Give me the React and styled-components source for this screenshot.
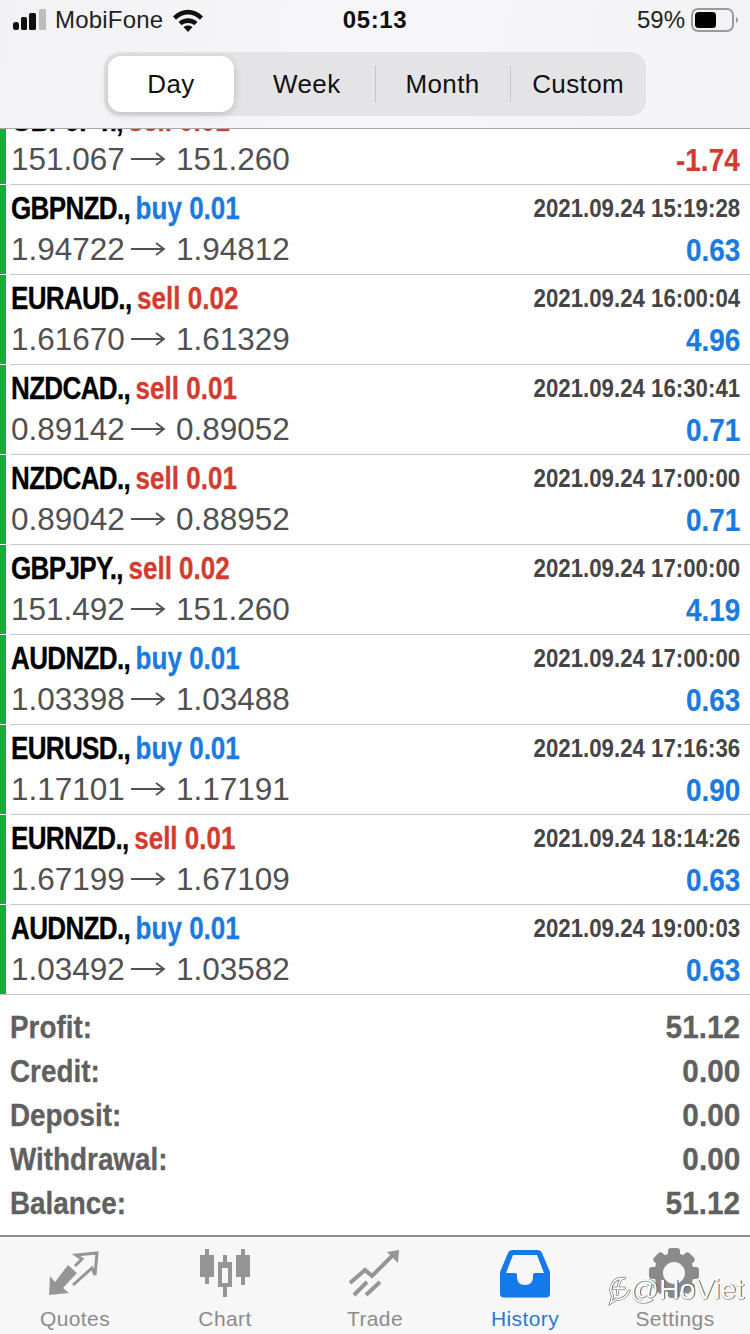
import React from "react";
import styled, { createGlobalStyle } from "styled-components";

const Global = createGlobalStyle`
  html, body { margin: 0; padding: 0; background: #fff; }
  body { font-family: "Liberation Sans", Arial, sans-serif; }
`;
const Page = styled.div`
  width: 750px; height: 1334px; display: flex; flex-direction: column; overflow: hidden; position: relative; background: #fff;
`;
const Header = styled.header`
  height: 129px; box-sizing: border-box; flex: none; background: linear-gradient(100deg, #f2f2f4, #f7f7fa 50%, #f3f3f5);
  border-bottom: 1px solid #a8a8a8; position: relative; z-index: 2;
`;
const Status = styled.div`
  height: 40px; padding: 0 12px 0 13px; display: flex; align-items: center; position: relative; color: #111; font-size: 24px;
`;
const Carrier = styled.span` margin-left: 9px; margin-right: 10px; letter-spacing: .2px; color: #222; `;
const Clock = styled.span`
  position: absolute; left: 0; right: 0; text-align: center; font-weight: 700; font-size: 24px; letter-spacing: .6px;
`;
const Battery = styled.span` margin-left: auto; margin-right: 6px; color: #222; `;
const Segments = styled.div`
  margin: 12px 0 0 104px; width: 542px; height: 64px; border-radius: 16px; background: #e4e4e6; display: flex; align-items: center; padding: 4px 0 4px 4px; box-sizing: border-box;
`;
const Segment = styled.div`
  flex: 1; height: 56px; display: flex; align-items: center; justify-content: center; font-size: 26px; letter-spacing: .4px; color: #111; position: relative;
  ${p => p.$active && `background: #fff; border-radius: 13px; box-shadow: 0 2px 8px rgba(0,0,0,.18); flex: none; width: 126px; margin-right: 5px;`}
  ${p => p.$divider && `&::before { content: ""; position: absolute; left: 0; top: 10px; bottom: 10px; width: 1px; background: #c6c6c8; }`}
`;
const List = styled.div`
  height: 866px; flex: none; overflow: hidden; box-sizing: border-box; border-bottom: 1px solid #c4c4c4;
`;
const Rows = styled.div` margin-top: -34px; `;
const Row = styled.div`
  height: 90px; box-sizing: border-box; padding-left: 11px; padding-right: 10px; position: relative; display: flex; flex-direction: column;
  &::before { content: ""; position: absolute; left: 0; top: 0; bottom: 1px; width: 6px; background: #12ad3d; }
  &::after { content: ""; position: absolute; left: 10px; right: 0; bottom: 0; height: 1px; background: #c8c8c8; }
  &:last-child::after { display: none; }
`;
const Line = styled.div` height: 44px; display: flex; align-items: center; justify-content: space-between; white-space: nowrap; `;
const Title = styled.span`
  font-weight: 700; font-size: 31px; color: #000; transform: scaleX(.84); transform-origin: left center; display: inline-block;
  margin-top: ${p => (p.$clipped ? "8px" : "4px")}; -webkit-text-stroke: .3px currentColor;
`;
const Symbol_ = styled.span` letter-spacing: -.8px; `;
const Side = styled.span` color: ${p => (p.$buy ? "#1b7ae0" : "#d23b2e")}; margin-left: -2px; `;
const Time = styled.span`
  font-weight: 700; font-size: 25px; color: #454545; transform: scaleX(.89); transform-origin: right center; display: inline-block; margin-top: 2px;
`;
const Price = styled.span` font-size: 31.5px; color: #505050; display: flex; align-items: center; margin-top: -4px; `;
const Arrow = styled.svg` width: 36px; height: 16px; margin: 0 10px 0 5px; flex: none; `;
const Pnl = styled.span`
  font-weight: 700; font-size: 31px; color: ${p => (p.$loss ? "#d23b2e" : "#1b7ae0")}; transform: scaleX(.9); transform-origin: right center; display: inline-block; margin-top: -1px; -webkit-text-stroke: .2px currentColor;
`;
const Summary = styled.div` flex: none; height: 240px; padding: 10px 10px 0 10px; box-sizing: border-box; `;
const SumRow = styled.div`
  height: 44px; display: flex; justify-content: space-between; align-items: center; font-weight: 700; font-size: 32px; color: #606060; -webkit-text-stroke: .3px currentColor;
`;
const SumLabel = styled.span` display: inline-block; transform: scaleX(.87); transform-origin: left center; `;
const SumValue = styled.span` display: inline-block; transform: scaleX(.93); transform-origin: right center; `;
const Tabs = styled.nav`
  flex: 1; display: grid; grid-template-columns: repeat(5, 1fr); background: #f7f7f7; border-top: 2px solid #8e8e8e; box-sizing: border-box; position: relative;
`;
const Tab = styled.div`
  display: flex; flex-direction: column; align-items: center; padding-top: 13px; color: ${p => (p.$active ? "#2e78c8" : "#8c8c8c")};
  font-size: 21px; letter-spacing: .4px;
`;
const TabIcon = styled.svg` width: 60px; height: 52px; flex: none; overflow: visible; `;
const TabLabel = styled.span` margin-top: 4px; line-height: 26px; `;
const Watermark = styled.div`
  position: absolute; right: 6px; bottom: 28px; color: #fff; font-size: 28.5px; display: flex; align-items: center;
  text-shadow: 1px 0 0 #555, 0 1px 0 rgba(0,0,0,.35);
`;

const rows = [
  ["GBPJPY.,", "sell 0.01", "", "151.067", "151.260", "-1.74"],
  ["GBPNZD.,", "buy 0.01", "2021.09.24 15:19:28", "1.94722", "1.94812", "0.63"],
  ["EURAUD.,", "sell 0.02", "2021.09.24 16:00:04", "1.61670", "1.61329", "4.96"],
  ["NZDCAD.,", "sell 0.01", "2021.09.24 16:30:41", "0.89142", "0.89052", "0.71"],
  ["NZDCAD.,", "sell 0.01", "2021.09.24 17:00:00", "0.89042", "0.88952", "0.71"],
  ["GBPJPY.,", "sell 0.02", "2021.09.24 17:00:00", "151.492", "151.260", "4.19"],
  ["AUDNZD.,", "buy 0.01", "2021.09.24 17:00:00", "1.03398", "1.03488", "0.63"],
  ["EURUSD.,", "buy 0.01", "2021.09.24 17:16:36", "1.17101", "1.17191", "0.90"],
  ["EURNZD.,", "sell 0.01", "2021.09.24 18:14:26", "1.67199", "1.67109", "0.63"],
  ["AUDNZD.,", "buy 0.01", "2021.09.24 19:00:03", "1.03492", "1.03582", "0.63"],
];
const summary = [["Profit:", "51.12"], ["Credit:", "0.00"], ["Deposit:", "0.00"], ["Withdrawal:", "0.00"], ["Balance:", "51.12"]];

const Signal = () => (
  <svg width="33" height="22" viewBox="0 0 33 22">
    <rect x="0" y="13" width="6" height="8" rx="2.500" fill="#111" />
    <rect x="8" y="8" width="6" height="13" rx="1.500" fill="#111" />
    <rect x="16" y="4" width="7" height="17" rx="1.500" fill="#111" />
    <rect x="26" y="0" width="7" height="21" rx="1.500" fill="#bcbcbc" />
  </svg>
);
const Wifi = () => (
  <svg width="30" height="23" viewBox="0 0 30 23">
    <path d="M0 7.500C8.500-1.500 21.500-1.500 30 7.500l-3 3.300C19.800 3.800 10.200 3.800 3 10.800z" fill="#111" />
    <path d="M5.500 13c5.500-5 13.500-5 19 0l-3.200 3.300c-3.700-3-8.900-3-12.600 0z" fill="#111" />
    <path d="M10.500 18c2.700-2 6.300-2 9 0L15 23z" fill="#111" />
  </svg>
);
const Batt = () => (
  <svg width="47" height="24" viewBox="0 0 47 24">
    <rect x="1" y="1" width="41" height="22" rx="6" fill="none" stroke="#9a9a9a" strokeWidth="2" />
    <rect x="4" y="4" width="21" height="16" rx="3.500" fill="#000" />
    <path d="M45 9c1.400.6 2 1.600 2 3s-.6 2.400-2 3z" fill="#9a9a9a" />
  </svg>
);

const QuotesIcon = () => (
  <TabIcon viewBox="0 0 60 52">
    <path d="M4 45L5 26l5 6 13-17 9 8-14 15 6 5z" fill="#959595" />
    <path d="M30 16l7-7-6-4 21-2-2 22-3-7-19 17" fill="none" stroke="#959595" strokeWidth="3" strokeLinejoin="miter" />
  </TabIcon>
);
const ChartIcon = () => (
  <TabIcon viewBox="0 0 60 52">
    <path d="M10 -1h4v6h5v22h-5v7h-4v-7H5V5h5z" fill="#959595" />
    <path d="M28 5h4v7h5v25h-5v10h-4V37h-5V12h5zM27 18v15h6V18z" fill="#959595" fillRule="evenodd" />
    <path d="M46 -1h4v6h5v22h-5v8h-4v-8h-5V5h5z" fill="#959595" />
  </TabIcon>
);
const TradeIcon = () => (
  <TabIcon viewBox="0 0 60 52">
    <path d="M5 33L20 20l7 6L48 5" fill="none" stroke="#959595" strokeWidth="4" />
    <path d="M42 2L54 0l-1 13z" fill="#959595" />
    <path d="M9 45L22 32M21 45L35 32" fill="none" stroke="#959595" strokeWidth="4" />
  </TabIcon>
);
const HistoryIcon = () => (
  <TabIcon viewBox="0 0 60 52">
    <path d="M18 0C15 0 14 1 13 3L5 22v22c0 2 1.500 3.500 3.500 3.500h43c2 0 3.500-1.500 3.500-3.500V22L47 3c-1-2-2-3-5-3z" fill="#1479ea" />
    <path d="M18 5h24l7 18H40c-1 0-2 1-2 2v2c0 5-3 8-8 8s-8-3-8-8v-2c0-1-1-2-2-2h-9z" fill="#f7f7f7" />
  </TabIcon>
);
const SettingsIcon = () => (
  <TabIcon viewBox="0 0 60 52">
    <g fill="#8a8a8a" transform="translate(29 23)">
      {[0, 45, 90, 135, 180, 225, 270, 315].map(a => (
        <rect key={a} x="-6" y="-25" width="12" height="14" rx="3" transform={`rotate(${a})`} />
      ))}
      <path fillRule="evenodd" d="M0-20a20 20 0 1 0 .01 0zM0-11a11 11 0 1 1-.01 0z" />
    </g>
  </TabIcon>
);
const WatermarkLogo = () => (
  <svg width="22" height="32" viewBox="0 0 24 32" style={{ overflow: "visible" }}>
    <g fill="none" strokeLinecap="round">
      <path d="M14 3C7 4 3 10 3 16c0 3 1 5 2 7l-2 7 6-4c6 1 12-3 14-9M18 3c-3 0-5 2-6 6l-2 12M6 14h12" stroke="#555" strokeWidth="3" />
      <path d="M14 3C7 4 3 10 3 16c0 3 1 5 2 7l-2 7 6-4c6 1 12-3 14-9M18 3c-3 0-5 2-6 6l-2 12M6 14h12" stroke="#fff" strokeWidth="1.800" />
    </g>
  </svg>
);

const PriceArrow = () => (
  <Arrow viewBox="0 0 36 16">
    <path d="M1 8h33M26 2l8 6-8 6" fill="none" stroke="#505050" strokeWidth="1.800" />
  </Arrow>
);

export default function App() {
  return (
    <Page>
      <Global />
      <Header>
        <Status>
          <Signal />
          <Carrier>MobiFone</Carrier>
          <Wifi />
          <Clock>05:13</Clock>
          <Battery>59%</Battery>
          <Batt />
        </Status>
        <Segments>
          <Segment $active>Day</Segment>
          <Segment>Week</Segment>
          <Segment $divider>Month</Segment>
          <Segment $divider>Custom</Segment>
        </Segments>
      </Header>
      <List>
        <Rows>
          {rows.map(([sym, side, time, from, to, pnl], i) => (
            <Row key={i}>
              <Line>
                <Title $clipped={i === 0}><Symbol_>{sym}</Symbol_> <Side $buy={side.startsWith("buy")}>{side}</Side></Title>
                <Time>{time}</Time>
              </Line>
              <Line>
                <Price>{from}<PriceArrow />{to}</Price>
                <Pnl $loss={pnl.startsWith("-")}>{pnl}</Pnl>
              </Line>
            </Row>
          ))}
        </Rows>
      </List>
      <Summary>
        {summary.map(([label, value]) => (
          <SumRow key={label}><SumLabel>{label}</SumLabel><SumValue>{value}</SumValue></SumRow>
        ))}
      </Summary>
      <Tabs>
        <Tab><QuotesIcon /><TabLabel>Quotes</TabLabel></Tab>
        <Tab><ChartIcon /><TabLabel>Chart</TabLabel></Tab>
        <Tab><TradeIcon /><TabLabel>Trade</TabLabel></Tab>
        <Tab $active><HistoryIcon /><TabLabel>History</TabLabel></Tab>
        <Tab><SettingsIcon /><TabLabel>Settings</TabLabel></Tab>
        <Watermark><WatermarkLogo />@HoViet</Watermark>
      </Tabs>
    </Page>
  );
}
